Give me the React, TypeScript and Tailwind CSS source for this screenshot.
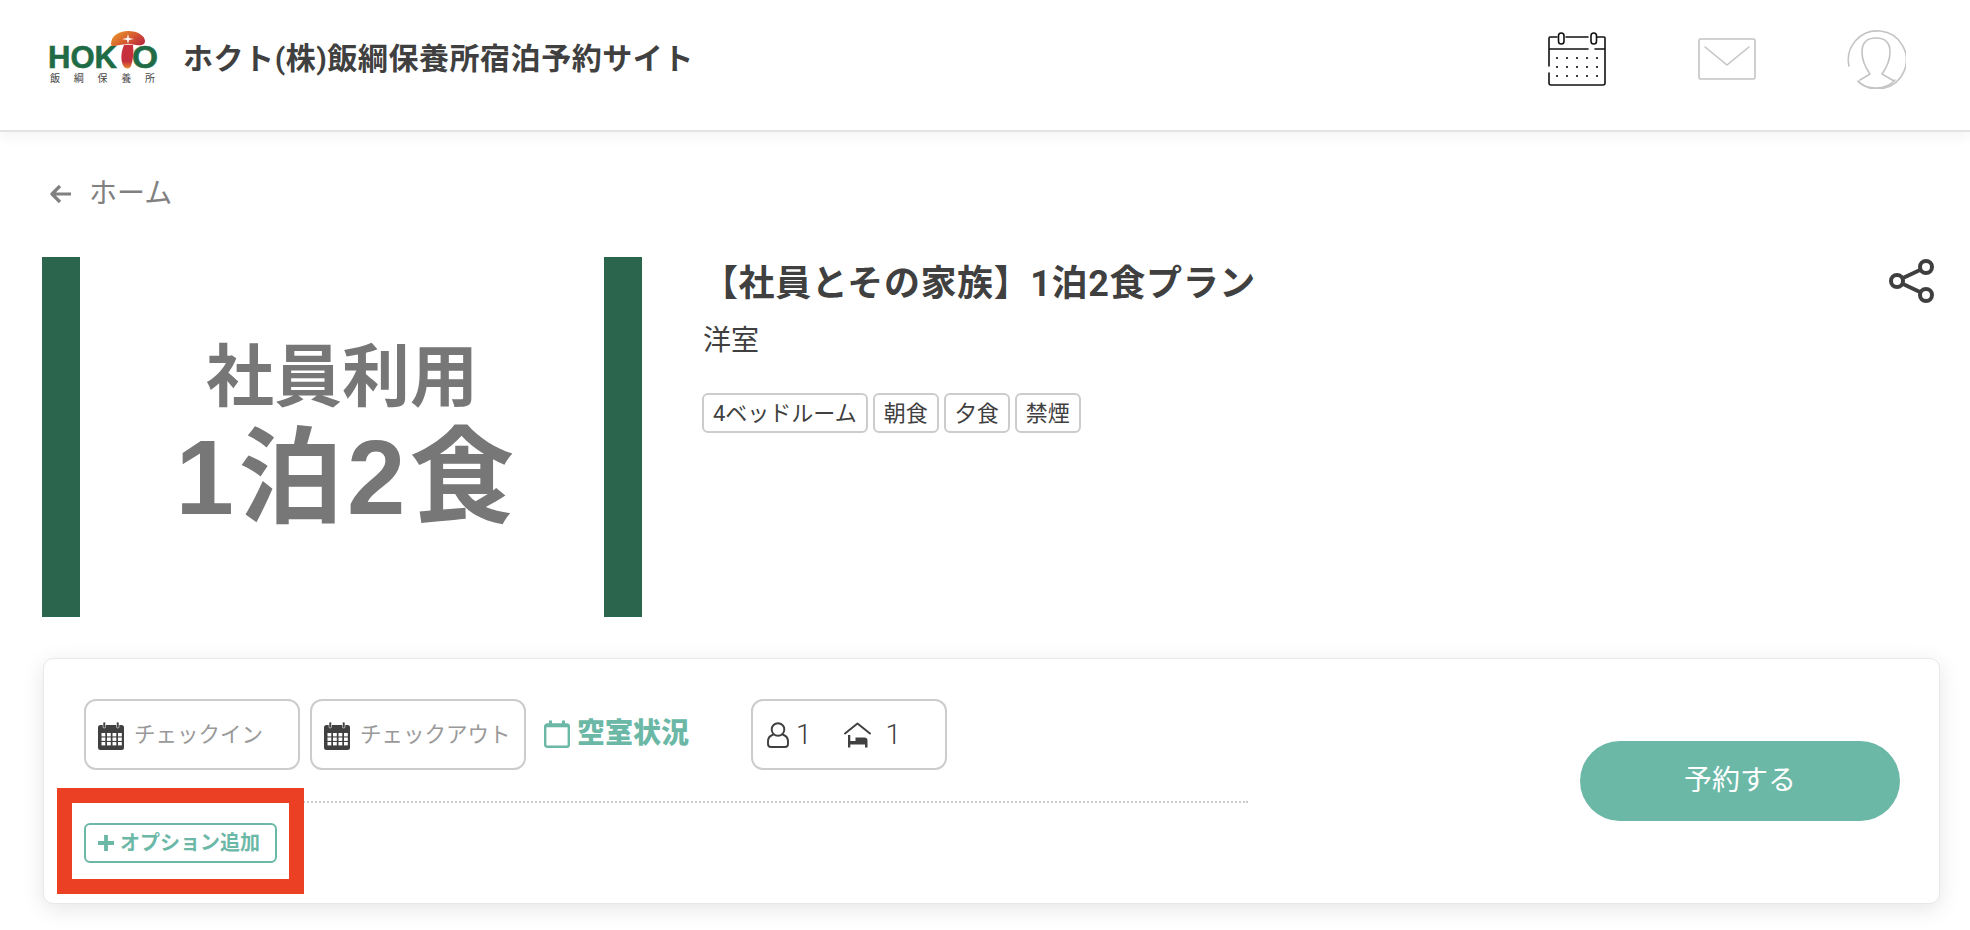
const font = { jp: "font-['Roboto','Noto_Sans_CJK_JP',sans-serif]" };

function Logo() {
  return (
    <svg width="112" height="54" viewBox="0 0 112 54" className="shrink-0">
      <defs>
        <linearGradient id="cap" x1="0" y1="0" x2="1" y2="0.6">
          <stop offset="0" stopColor="#e9a32c" />
          <stop offset="0.55" stopColor="#d9622f" />
          <stop offset="1" stopColor="#bf2f3a" />
        </linearGradient>
        <linearGradient id="stem" x1="0" y1="0" x2="0" y2="1">
          <stop offset="0" stopColor="#c92f3d" />
          <stop offset="0.7" stopColor="#c62f3c" />
          <stop offset="1" stopColor="#e58a2f" />
        </linearGradient>
      </defs>
      <text x="0" y="38" fontFamily="Liberation Sans" fontWeight="700" fontSize="32" fill="#1f6b45" stroke="#1f6b45" strokeWidth="0.6" textLength="69" lengthAdjust="spacingAndGlyphs">HOK</text>
      <text x="84" y="38" fontFamily="Liberation Sans" fontWeight="700" fontSize="32" fill="#1f6b45" stroke="#1f6b45" strokeWidth="0.6" textLength="26" lengthAdjust="spacingAndGlyphs">O</text>
      <path d="M63 14C63 6 71 1 80 1C90 1 97 6 97 11C97 15 93 16 88 15C85 14 76 14 72 15C67 16 63 17 63 14Z" fill="url(#cap)" />
      <path d="M76 15L85 15C86 22 85 30 83 36C82 39 78 39 76 37C72 31 73 22 76 15Z" fill="url(#stem)" />
      <path d="M80 4L81 8L86 9L81 10L80 14L79 10L74 9L79 8Z" fill="#fff" />
      <text x="2" y="52" fontFamily="Noto Sans CJK JP" fontSize="10" fill="#444" textLength="105">飯 綱 保 養 所</text>
    </svg>
  );
}

function CalendarLine() {
  const xs = [9, 19, 29, 39, 49];
  const ys = [26, 35, 44];
  return (
    <svg width="58" height="54" viewBox="0 0 58 54" fill="none" stroke="#111" strokeWidth="1.6" strokeLinecap="round">
      <path d="M1 34V6.5Q1 5 2 5H9M18 5H40M49 5H56Q57 5 57 6V51Q57 53 55 53H3Q1 53 1 51V41M1 17H40M47 17H57" />
      <rect x="10.5" y="1" width="5.5" height="11" rx="2.7" />
      <rect x="43" y="1" width="5.5" height="11" rx="2.7" />
      {ys.map((y) => xs.map((x) => <circle key={`${x}-${y}`} cx={x} cy={y} r="1.1" fill="#111" stroke="none" />))}
    </svg>
  );
}

function MailIcon() {
  return (
    <svg width="58" height="42" viewBox="0 0 58 42" fill="none" stroke="#c4c4c4" strokeWidth="1.6" strokeLinecap="round" strokeLinejoin="round">
      <rect x="1" y="1" width="56" height="40" rx="1.5" />
      <path d="M7 9L29 27L51 9" />
    </svg>
  );
}

function AvatarIcon() {
  return (
    <svg width="60" height="60" viewBox="0 0 60 60" fill="none" stroke="#c4c4c4" strokeWidth="1.6" strokeLinecap="round" strokeLinejoin="round">
      <path d="M3 37A29 29 0 1 1 12 52.5" />
      <path d="M12 52Q18 59 30 59Q42 59 49 51" />
      <path d="M14 51L24 45C19 38 16 31 16 23C16 13 22 9 30 9C38 9 44 13 44 23C44 31 41 38 36 45L48 52" />
    </svg>
  );
}

function ShareIcon() {
  return (
    <svg width="46" height="46" viewBox="0 0 46 46" fill="none" stroke="#3f3f3f" strokeWidth="4">
      <circle cx="37" cy="9" r="6" />
      <circle cx="8" cy="23" r="6" />
      <circle cx="37" cy="37" r="6" />
      <path d="M13.5 20.3L31.5 11.7M13.5 25.7L31.5 34.3" />
    </svg>
  );
}

function CalendarSolid() {
  const cols = [3.5, 9, 14.5, 20];
  const rows = [11, 15.5, 20];
  return (
    <svg width="26" height="28" viewBox="0 0 26 28" className="shrink-0">
      <rect x="0" y="3" width="26" height="25" rx="2.5" fill="#404040" />
      <rect x="5" y="0" width="2.5" height="6" rx="1.2" fill="#404040" stroke="#fff" strokeWidth="0.6" />
      <rect x="18.5" y="0" width="2.5" height="6" rx="1.2" fill="#404040" stroke="#fff" strokeWidth="0.6" />
      {rows.map((y) => cols.map((x) => <rect key={`${x}-${y}`} x={x} y={y} width="3.8" height="3.4" fill="#fff" />))}
    </svg>
  );
}

function CalendarOutline() {
  return (
    <svg width="26" height="28" viewBox="0 0 26 28" fill="none" stroke="#6bb8a7" strokeWidth="2.4" className="shrink-0">
      <rect x="1.2" y="4.5" width="23.6" height="22.3" rx="2" />
      <path d="M6.5 0.5V7M19.5 0.5V7" strokeWidth="3" />
      <path d="M1.2 6H24.8" strokeWidth="2.6" />
    </svg>
  );
}

function PersonIcon() {
  return (
    <svg width="22" height="26" viewBox="0 0 22 26" fill="none" stroke="#404040" strokeWidth="1.9">
      <circle cx="11" cy="7.5" r="6.3" />
      <path d="M6.5 12.5C3 13.5 1 16 1 19.5V22C1 24 2.5 25 4 25H18C19.5 25 21 24 21 22V19.5C21 16 19 13.5 15.5 12.5" />
    </svg>
  );
}

function RoomIcon() {
  return (
    <svg width="27" height="26" viewBox="0 0 27 26" fill="none">
      <path d="M1 11.5L13.5 1.5L26 11.5" stroke="#404040" strokeWidth="2" strokeLinecap="round" strokeLinejoin="round" />
      <path d="M4 13V25.5H6.3V22.5H21V25.5H23.5V18.5C23.5 16.5 22.5 15.5 20.5 15.5H11.5V19H6.3V13Z" fill="#404040" />
    </svg>
  );
}

function PlanImage() {
  return (
    <div className="flex h-[360px] w-[600px] shrink-0 bg-white">
      <div className="w-[38px] bg-[#2c654e]" />
      <div className="flex flex-1 flex-col items-center pt-[76px] font-['Liberation_Sans','Noto_Sans_CJK_JP',sans-serif] font-bold text-[#777777]">
        <div className="text-[68px] leading-[88px]">社員利用</div>
        <div className="pl-[10px] text-[105px] leading-[114px] tracking-[4px]">1泊2食</div>
      </div>
      <div className="w-[38px] bg-[#2c654e]" />
    </div>
  );
}

const tags = ["4ベッドルーム", "朝食", "夕食", "禁煙"];

export default function App() {
  return (
    <div className={`relative min-h-[930px] overflow-hidden bg-white text-[#404040] ${font.jp}`}>
      <header className="flex h-[132px] items-center border-b-2 border-[#e3e3e3] bg-white pl-[48px] shadow-[0_4px_14px_rgba(0,0,0,0.05)]">
        <div className="-mt-[16px]">
          <Logo />
        </div>
        <h1 className="ml-[23px] -mt-[12px] text-[30px] font-bold leading-[40px] tracking-[0.55px]">ホクト(株)飯綱保養所宿泊予約サイト</h1>
        <nav className="ml-auto -mt-[12px] flex items-center pr-[64px]">
          <CalendarLine />
          <div className="ml-[92px]">
            <MailIcon />
          </div>
          <div className="ml-[90px]">
            <AvatarIcon />
          </div>
        </nav>
      </header>

      <div className="mt-[42px] flex h-[40px] items-center pl-[50px] text-[#808080]">
        <svg width="21" height="20" viewBox="0 0 21 20" fill="none" stroke="#808080" strokeWidth="3.2" strokeLinejoin="round">
          <path d="M10 2L2 10L10 18M2 10H21" />
        </svg>
        <span className="ml-[18px] text-[28px] leading-[40px]">ホーム</span>
      </div>

      <section className="ml-[42px] mt-[43px] flex h-[360px]">
        <PlanImage />
        <div className="ml-[61px] flex-1">
          <h2 className="-ml-[1px] text-[36px] font-bold leading-[54px] tracking-[0.6px]">【社員とその家族】1泊2食プラン</h2>
          <p className="mt-[10px] text-[28px] leading-[40px]">洋室</p>
          <ul className="-ml-[1px] mt-[32px] flex gap-[5px]">
            {tags.map((tag) => (
              <li key={tag} className="flex h-[40px] items-center rounded-[6px] border-2 border-[#cccccc] px-[9px] text-[22px]">
                {tag}
              </li>
            ))}
          </ul>
        </div>
        <div className="mr-[35px] mt-[1px]">
          <ShareIcon />
        </div>
      </section>

      <section className="relative ml-[43px] mt-[41px] flex h-[246px] w-[1897px] items-center rounded-[10px] border border-[#e8e8e8] bg-white pl-[40px] pr-[39px] shadow-[0_5px_22px_rgba(0,0,0,0.1)]">
        <div className="w-[1164px] self-start pt-[40px]">
          <div className="flex h-[71px] items-center">
            <div className="flex h-[71px] w-[216px] items-center rounded-[12px] border-2 border-[#cccccc] pl-[12px] pt-[2px]">
              <CalendarSolid />
              <span className="ml-[10px] text-[21.5px] text-[#999999]">チェックイン</span>
            </div>
            <div className="ml-[10px] flex h-[71px] w-[216px] items-center rounded-[12px] border-2 border-[#cccccc] pl-[12px] pt-[2px]">
              <CalendarSolid />
              <span className="ml-[10px] whitespace-nowrap text-[21.5px] text-[#999999]">チェックアウト</span>
            </div>
            <div className="ml-[18px] flex -translate-y-[1px] items-center">
              <CalendarOutline />
              <span className="ml-[7px] text-[28px] font-black text-[#6bb8a7]">空室状況</span>
            </div>
            <div className="ml-[62px] flex h-[71px] w-[196px] items-center rounded-[12px] border-2 border-[#cccccc] pl-[14px] text-[28px] font-light">
              <PersonIcon />
              <span className="ml-[7px]">1</span>
              <div className="ml-[32px]">
                <RoomIcon />
              </div>
              <span className="ml-[15px]">1</span>
            </div>
          </div>
          <div className="mt-[31px] border-t-2 border-dotted border-[#cccccc]" />
          <button className="mt-[20px] flex h-[40px] w-[193px] items-center rounded-[6px] border-2 border-[#6bb8a7] pl-[12px] text-[20px] font-bold text-[#6bb8a7]">
            <svg width="16" height="16" viewBox="0 0 15 15" fill="#6bb8a7" className="shrink-0">
              <path d="M5.7 0H9.3V5.7H15V9.3H9.3V15H5.7V9.3H0V5.7H5.7Z" />
            </svg>
            <span className="ml-[6px] whitespace-nowrap">オプション追加</span>
          </button>
        </div>
        <button className="ml-auto h-[80px] w-[320px] rounded-full bg-[#6bb8a7] text-[28px] text-white">予約する</button>
        <div className="absolute left-[13px] top-[129px] h-[106px] w-[247px] border-[15px] border-[#ec4024]" />
      </section>
    </div>
  );
}
